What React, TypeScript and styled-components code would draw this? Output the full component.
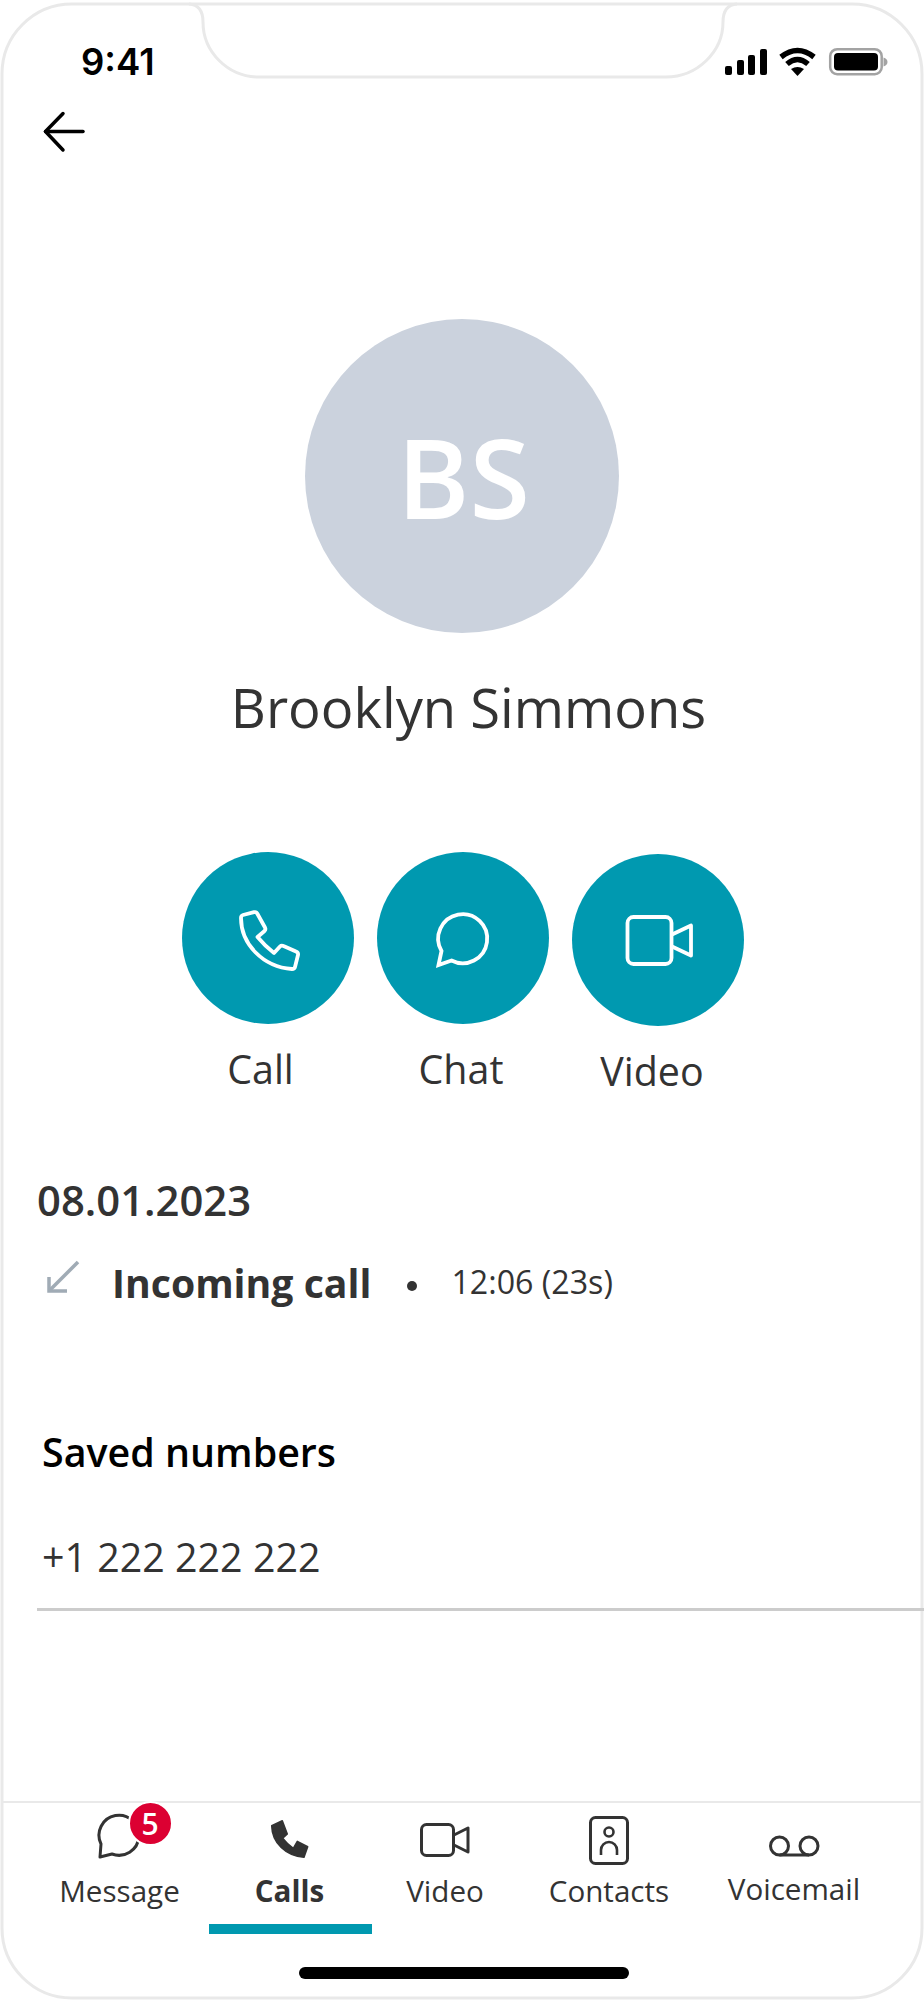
import React from "react";
import styled, { createGlobalStyle } from "styled-components";

const TEAL = "#0099b0";
const INK = "#333333";

const GlobalStyle = createGlobalStyle`
  html, body {
    margin: 0;
    padding: 0;
    background: #ffffff;
  }
  * {
    box-sizing: border-box;
  }
`;

const Phone = styled.div`
  position: relative;
  width: 924px;
  height: 2000px;
  display: flex;
  flex-direction: column;
  background: #ffffff;
  color: ${INK};
  font-family: "Open Sans", "Noto Sans", sans-serif;
  overflow: hidden;
`;

const FrameOutline = styled.svg`
  position: absolute;
  top: 0;
  left: 0;
  pointer-events: none;
`;

const StatusBar = styled.div`
  height: 96px;
  padding: 42px 32px 0 81px;
  display: flex;
  justify-content: space-between;
  align-items: flex-start;
`;

const Clock = styled.span`
  font-family: Inter, "Liberation Sans", sans-serif;
  font-size: 36.5px;
  font-weight: 600;
  line-height: 40px;
  color: #000000;
`;

const StatusGlyphs = styled.svg`
  margin-top: 5px;
`;

const BackRow = styled.div`
  height: 58px;
  padding: 14px 0 0 42px;
`;

const Avatar = styled.div`
  width: 314px;
  height: 314px;
  margin: 165px auto 0;
  padding-left: 3px;
  border-radius: 50%;
  background: #cbd2dd;
  color: #ffffff;
  font-size: 110px;
  font-weight: 600;
  display: flex;
  align-items: center;
  justify-content: center;
`;

const Name = styled.h1`
  margin: 39px 0 0;
  padding-left: 13px;
  font-size: 54.3px;
  font-weight: 400;
  line-height: 70px;
  text-align: center;
  color: ${INK};
`;

const Actions = styled.div`
  margin-top: 110px;
  padding-left: 182px;
  display: flex;
  align-items: flex-start;
  gap: 23px;
`;

const Action = styled.div<{ $drop?: number }>`
  width: 172px;
  margin-top: ${(p) => p.$drop ?? 0}px;
  display: flex;
  flex-direction: column;
  align-items: center;
`;

const ActionCircle = styled.div`
  width: 172px;
  height: 172px;
  border-radius: 50%;
  background: ${TEAL};
  display: flex;
  align-items: center;
  justify-content: center;
`;

const ActionLabel = styled.span<{ $inset: number }>`
  margin-top: 20px;
  padding-right: ${(p) => p.$inset}px;
  font-size: 39.4px;
  line-height: 50px;
  color: ${INK};
`;

const History = styled.section`
  padding-left: 37px;
`;

const DateHeading = styled.h2`
  margin: 76px 0 0;
  font-size: 41.8px;
  font-weight: 600;
  line-height: 56px;
  color: ${INK};
`;

const CallRow = styled.div`
  margin-top: 29px;
  display: flex;
  align-items: center;
`;

const CallArrow = styled.svg`
  margin: 0 31px 12px 4px;
`;

const CallType = styled.span`
  font-size: 39.2px;
  font-weight: 700;
  line-height: 52px;
`;

const Dot = styled.span`
  width: 10px;
  height: 10px;
  margin: 6px 34px 0 36px;
  border-radius: 50%;
  background: ${INK};
`;

const CallTime = styled.span`
  padding-bottom: 3px;
  font-size: 32.2px;
  line-height: 40px;
`;

const Saved = styled.section`
  margin-top: 118px;
  padding-left: 42px;
`;

const SavedTitle = styled.h3`
  margin: 0;
  font-size: 39.4px;
  font-weight: 600;
  line-height: 50px;
  color: #000000;
`;

const PhoneNumber = styled.div`
  margin-top: 53px;
  font-size: 39.4px;
  line-height: 54px;
  color: ${INK};
`;

const Divider = styled.div`
  position: relative;
  z-index: 1;
  height: 3px;
  margin: 24px 0 0 37px;
  background: #cccccc;
`;

const TabBar = styled.nav`
  margin: auto 2px 0;
  padding-top: 8px;
  padding-left: 33px;
  border-top: 2.5px solid #e9e9e9;
  display: grid;
  grid-template-columns: 169px 171px 140px 188px 182px;
  height: 134px;
`;

const Tab = styled.div`
  display: flex;
  flex-direction: column;
  align-items: center;
`;

const TabIcon = styled.div`
  position: relative;
  width: 80px;
  height: 56px;
`;

const Badge = styled.span`
  position: absolute;
  top: -10px;
  left: 48px;
  width: 45px;
  height: 45px;
  border: 2px solid #ffffff;
  border-radius: 50%;
  background: #dc0032;
  color: #ffffff;
  font-size: 30px;
  font-weight: 600;
  line-height: 41px;
  text-align: center;
`;

const TabLabel = styled.span<{ $active?: boolean; $lift?: number }>`
  margin-top: ${(p) => 4 - (p.$lift ?? 0)}px;
  font-size: 29.6px;
  font-weight: ${(p) => (p.$active ? 700 : 400)};
  line-height: 40px;
  color: ${INK};
`;

const ActiveBar = styled.div`
  width: 163px;
  height: 10px;
  margin: 13px 0 0 2px;
  background: ${TEAL};
`;

const HomeBar = styled.div`
  width: 330px;
  height: 12px;
  margin: 32px 0 21px 299px;
  border-radius: 6px;
  background: #000000;
`;

const StatusIcons = () => (
  <StatusGlyphs width="170" height="30" viewBox="0 0 170 30">
    <rect x="3" y="19" width="7" height="9" rx="2" fill="#000" />
    <rect x="15" y="13" width="7" height="15" rx="2" fill="#000" />
    <rect x="26" y="8" width="7" height="20" rx="2" fill="#000" />
    <rect x="38" y="2" width="7" height="26" rx="2" fill="#000" />
    <path d="M59 10Q75.5-3 92 10" fill="none" stroke="#000" strokeWidth="5.5" />
    <path d="M65 17Q75.5 8 86 17" fill="none" stroke="#000" strokeWidth="5.5" />
    <path d="M69 22Q75.5 18 82 22L75.5 29Z" fill="#000" />
    <rect x="108.2" y="2.2" width="51.5" height="25" rx="7" fill="none" stroke="#a3a3a3" strokeWidth="2.5" />
    <rect x="112" y="6" width="44" height="17.5" rx="4" fill="#000" />
    <path d="M161.5 10.5C164 11 165.5 13 165.5 15C165.5 17 164 19 161.5 19.5Z" fill="#a3a3a3" />
  </StatusGlyphs>
);

const BackIcon = () => (
  <svg width="44" height="44" viewBox="0 0 44 44" fill="none" stroke="#000" strokeWidth="3.5" strokeLinecap="round" strokeLinejoin="round">
    <path d="M41 21.5H3.5" />
    <path d="M21 3.5L3.5 21.5L21 40" />
  </svg>
);

const CallIcon = () => (
  <svg width="80" height="80" viewBox="0 0 80 80" fill="none" stroke="#fff" strokeWidth="3.8" strokeLinejoin="round">
    <path d="M15 17L26 14.2Q28.5 13.6 29.5 16L37 29.5Q38 31.5 36.5 33L29.5 39Q37 48 46 55L52 48.5Q53.5 47 55.5 48L68 53.5Q70.5 54.5 70 57L67 69Q66.5 71 64 71C35 69 13 46 13 20Q13 17.5 15 17Z" />
  </svg>
);

const ChatIcon = () => (
  <svg width="80" height="80" viewBox="0 0 80 80" fill="none" stroke="#fff" strokeWidth="3.8" strokeLinejoin="miter">
    <path d="M18.5 53L15.5 67L28.5 62.5A24.5 24.5 0 1 0 18.5 53Z" />
  </svg>
);

const VideoIcon = () => (
  <svg width="80" height="80" viewBox="0 0 80 80" fill="none" stroke="#fff" strokeWidth="3.8" strokeLinejoin="round">
    <rect x="9.5" y="17" width="44" height="47" rx="6" />
    <path d="M54 34.5L73 25.5V55.5L54 46.5" />
  </svg>
);

const IncomingArrow = () => (
  <CallArrow width="40" height="38" viewBox="0 0 40 38" fill="none" stroke="#a0abb5" strokeWidth="3.5">
    <path d="M37 4L8 33" />
    <path d="M8 19V33H26" />
  </CallArrow>
);

const TabSvg: React.FC<{ children: React.ReactNode }> = ({ children }) => (
  <svg width="80" height="56" viewBox="0 0 80 56" fill="none" stroke={INK} strokeWidth="3">
    {children}
  </svg>
);

const tabs = [
  {
    label: "Message",
    badge: "5",
    icon: <path d="M21 33L20 46L32 43A20 20 0 1 0 21 33Z" strokeLinejoin="round" />,
  },
  {
    label: "Calls",
    active: true,
    icon: (
      <path
        d="M21.7 14.7L32.3 9.7L37.3 23L32.7 27.3Q37 33 43.3 37.3L47.3 30.3L57.7 35.7L54 46.3C36 45 22 32 21.7 14.7Z"
        fill={INK}
        strokeWidth="1.5"
        strokeLinejoin="round"
      />
    ),
  },
  {
    label: "Video",
    icon: (
      <>
        <rect x="16.5" y="13.5" width="32" height="31" rx="5" />
        <path d="M49 24L63 17V41L49 34" strokeLinejoin="round" />
      </>
    ),
  },
  {
    label: "Contacts",
    icon: (
      <>
        <rect x="21.5" y="6.5" width="37" height="46" rx="5" />
        <circle cx="40" cy="21" r="4.5" strokeWidth="2.6" />
        <path d="M32 44V39A8 8 0 0 1 48 39V44" strokeWidth="2.6" />
      </>
    ),
  },
  {
    label: "Voicemail",
    lift: 2,
    icon: (
      <>
        <circle cx="25.5" cy="35" r="9" />
        <circle cx="55" cy="35" r="9" />
        <path d="M25.5 44H55" />
      </>
    ),
  },
];

const App: React.FC = () => {
  return (
    <Phone>
      <GlobalStyle />
      <StatusBar>
        <Clock>9:41</Clock>
        <StatusIcons />
      </StatusBar>
      <BackRow>
        <BackIcon />
      </BackRow>

      <Avatar>BS</Avatar>
      <Name>Brooklyn Simmons</Name>

      <Actions>
        <Action>
          <ActionCircle>
            <CallIcon />
          </ActionCircle>
          <ActionLabel $inset={15}>Call</ActionLabel>
        </Action>
        <Action>
          <ActionCircle>
            <ChatIcon />
          </ActionCircle>
          <ActionLabel $inset={4}>Chat</ActionLabel>
        </Action>
        <Action $drop={2}>
          <ActionCircle>
            <VideoIcon />
          </ActionCircle>
          <ActionLabel $inset={12}>Video</ActionLabel>
        </Action>
      </Actions>

      <History>
        <DateHeading>08.01.2023</DateHeading>
        <CallRow>
          <IncomingArrow />
          <CallType>Incoming call</CallType>
          <Dot />
          <CallTime>12:06 (23s)</CallTime>
        </CallRow>
      </History>

      <Saved>
        <SavedTitle>Saved numbers</SavedTitle>
        <PhoneNumber>+1 222 222 222</PhoneNumber>
      </Saved>
      <Divider />

      <TabBar>
        {tabs.map((tab) => (
          <Tab key={tab.label}>
            <TabIcon>
              <TabSvg>{tab.icon}</TabSvg>
              {tab.badge && <Badge>{tab.badge}</Badge>}
            </TabIcon>
            <TabLabel $active={tab.active} $lift={tab.lift}>
              {tab.label}
            </TabLabel>
            {tab.active && <ActiveBar />}
          </Tab>
        ))}
      </TabBar>
      <HomeBar />

      <FrameOutline width="924" height="2000" viewBox="0 0 924 2000" fill="none" stroke="#e9e9e9" strokeWidth="3">
        <rect x="2" y="4" width="920" height="1994" rx="70" />
        <path d="M189 4Q203 5 203 22C203 52 228 77 259 77H666C697 77 723 52 723 22Q723 5 737 4" />
      </FrameOutline>
    </Phone>
  );
};

export default App;
